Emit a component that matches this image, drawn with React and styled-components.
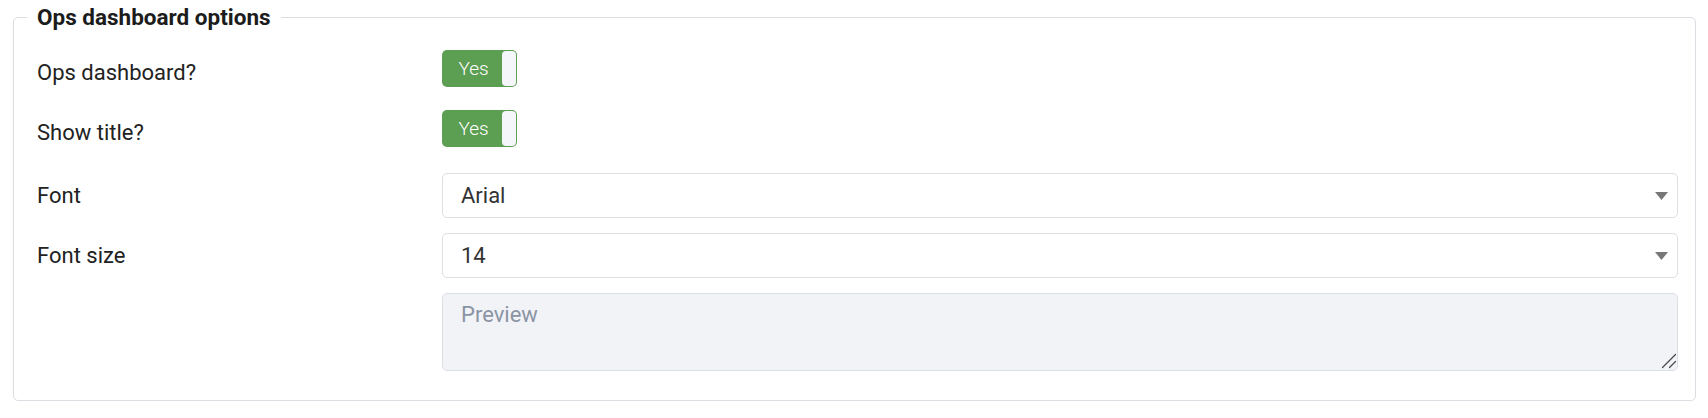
import React from 'react';
import styled, { createGlobalStyle } from 'styled-components';

const GlobalStyle = createGlobalStyle`
  html, body {
    margin: 0;
    padding: 0;
    background: #ffffff;
  }
  body {
    font-family: Roboto, "Noto Sans", "Liberation Sans", sans-serif;
    color: #212121;
  }
`;

const Page = styled.div`
  padding: 4px 12px 0 13px;
`;

const Fieldset = styled.fieldset`
  margin: 0;
  min-width: 0;
  padding: 20px 17px 29px 23px;
  border: 1px solid #dadde2;
  border-radius: 5px;
`;

const Legend = styled.legend`
  margin-left: -10px;
  padding: 0 10px;
  font-size: 22.5px;
  line-height: 26px;
  font-weight: 700;
  color: #1c1c1c;
`;

const Rows = styled.div`
  display: flex;
  flex-direction: column;
`;

const Row = styled.div`
  display: grid;
  grid-template-columns: 405px 1fr;
  align-items: center;
  min-height: ${p => p.$height || 45}px;
  margin-top: ${p => p.$gap || 0}px;
`;

const Label = styled.div`
  font-size: 22px;
  line-height: 26px;
  color: #222;
`;

const Toggle = styled.div`
  align-self: start;
  box-sizing: border-box;
  display: flex;
  width: 75px;
  height: 37px;
  padding: 1px;
  border-radius: 5px;
  background: #5c9e52;
`;

const ToggleText = styled.span`
  flex: 1;
  display: flex;
  align-items: center;
  justify-content: center;
  padding-left: 2px;
  color: #fff;
  font-size: 19px;
  font-weight: 300;
`;

const Knob = styled.span`
  width: 14px;
  border-radius: 4px;
  background: #f4f6fa;
`;

const SelectBox = styled.div`
  box-sizing: border-box;
  display: flex;
  align-items: center;
  justify-content: space-between;
  height: 45px;
  padding: 0 9px 0 18px;
  border: 1px solid #dcdfe4;
  border-radius: 5px;
  background: #fff;
  font-size: 22px;
  color: #333;
`;

const Caret = styled.svg`
  width: 13px;
  height: 8px;
  fill: #777;
`;

const PreviewWrap = styled.div`
  position: relative;
`;

const Preview = styled.textarea`
  box-sizing: border-box;
  display: block;
  width: 100%;
  height: 78px;
  margin: 0;
  padding: 5px 18px;
  border: 1px solid #dcdfe4;
  border-radius: 5px;
  background: #f2f3f7;
  font-family: Roboto, "Noto Sans", sans-serif;
  font-size: 22px;
  line-height: 32px;
  color: #333;
  resize: none;
  outline: none;

  &::placeholder {
    color: #8b94a4;
  }
`;

const Grip = styled.svg`
  position: absolute;
  right: 1px;
  bottom: 2px;
  width: 16px;
  height: 16px;
  stroke: #4a4a4a;
  stroke-width: 1.2;
  stroke-linecap: round;
  pointer-events: none;
`;

function Switch({ label }) {
  return (
    <Toggle>
      <ToggleText>{label}</ToggleText>
      <Knob />
    </Toggle>
  );
}

function Select({ value }) {
  return (
    <SelectBox>
      <span>{value}</span>
      <Caret viewBox="0 0 13 8">
        <path d="M0 0 H13 L6.5 8 Z" />
      </Caret>
    </SelectBox>
  );
}

export default function App() {
  return (
    <>
      <GlobalStyle />
      <Page>
        <Fieldset>
          <Legend>Ops dashboard options</Legend>
          <Rows>
            <Row $height={46}>
              <Label>Ops dashboard?</Label>
              <Switch label="Yes" />
            </Row>
            <Row $height={46} $gap={14}>
              <Label>Show title?</Label>
              <Switch label="Yes" />
            </Row>
            <Row $gap={17}>
              <Label>Font</Label>
              <Select value="Arial" />
            </Row>
            <Row $gap={15}>
              <Label>Font size</Label>
              <Select value="14" />
            </Row>
            <Row $gap={15}>
              <span />
              <PreviewWrap>
                <Preview readOnly placeholder="Preview" />
                <Grip viewBox="0 0 16 16">
                  <line x1="1.5" y1="14.5" x2="14.5" y2="1.5" />
                  <line x1="8.5" y1="14.5" x2="14.5" y2="8.5" />
                </Grip>
              </PreviewWrap>
            </Row>
          </Rows>
        </Fieldset>
      </Page>
    </>
  );
}
